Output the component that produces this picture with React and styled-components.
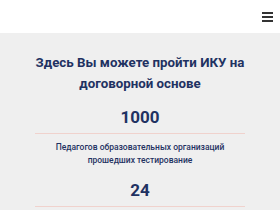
import styled, { createGlobalStyle } from 'styled-components';

const GlobalStyle = createGlobalStyle`
    body {
        margin: 0;
        background: #efefef;
        font-family: Roboto, "Liberation Sans", sans-serif;
    }
`

const Header = styled.header`
    height: 33px;
    background: #fff;
    display: flex;
    align-items: center;
    justify-content: flex-end;
    padding-right: 7px;
`

const Burger = styled.button`
    width: 11px;
    height: 10px;
    padding: 0;
    border: 0;
    background: none;
    display: flex;
    flex-direction: column;
    justify-content: space-between;
    span {
        display: block;
        height: 2px;
        background: #333;
    }
`

const Section = styled.section`
    padding: 19px 35px 0;
    text-align: center;
    color: #1f3262;
`

const Title = styled.h2`
    margin: 0;
    font-size: 13.3px;
    line-height: 21px;
    font-weight: 700;
`

const Number = styled.div`
    margin-top: 13px;
    padding-bottom: 6px;
    font-size: 17px;
    line-height: 20px;
    font-weight: 700;
    border-bottom: 1px solid #f0d2cd;
`

const Label = styled.p`
    margin: 7px 0 0;
    font-size: 8.5px;
    line-height: 13px;
    font-weight: 500;
`

const stats = [
    { value: '1000', label: 'Педагогов образовательных организаций прошедших тестирование' },
    { value: '24', label: '' },
]

export default function App(){
    return <>
        <GlobalStyle />
        <Header>
            <Burger aria-label="Меню"><span /><span /><span /></Burger>
        </Header>
        <Section>
            <Title>Здесь Вы можете пройти ИКУ на договорной основе</Title>
            {stats.map(s => <div key={s.value}>
                <Number>{s.value}</Number>
                {s.label && <Label>{s.label}</Label>}
            </div>)}
        </Section>
    </>
}
